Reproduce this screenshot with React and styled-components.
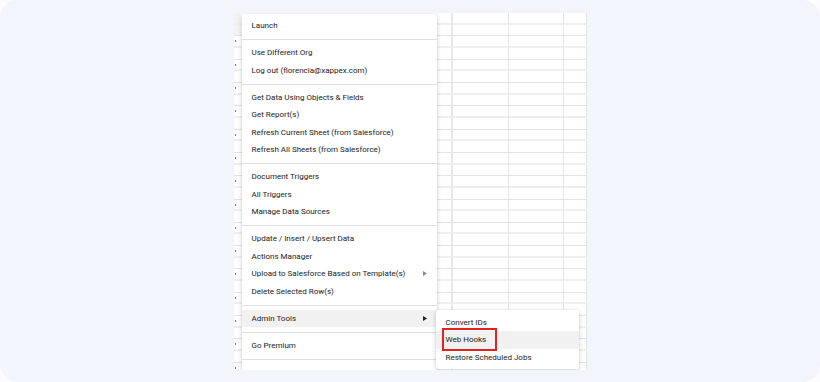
import React from 'react';
import styled, { createGlobalStyle } from 'styled-components';

const GlobalStyle = createGlobalStyle`
  html, body { margin: 0; padding: 0; background: #fcfcff; }
  body { font-family: Roboto, "Liberation Sans", Arial, sans-serif; }
`;

const Frame = styled.div`
  width: 820px;
  height: 382px;
  box-sizing: border-box;
  border-radius: 18px;
  background: #f3f5fd;
  display: flex;
  justify-content: center;
  padding-top: 13px;
  overflow: hidden;
`;

const Sheet = styled.div`
  position: relative;
  width: 353px;
  height: 357px;
  background: #fff;
  overflow: hidden;
  display: grid;
  grid-template-columns: 7px 212px 56px 55px 1fr;
  grid-auto-rows: 11.67px;
  align-content: start;
`;

const Cell = styled.div`
  box-sizing: border-box;
  border-bottom: ${(p) => (p.$even ? '2.5px solid #efefef' : '1px solid #e3e3e3')};
  border-right: ${(p) => (p.$col === 1 ? '2px solid #e8e8e8' : p.$col === 0 ? 'none' : '1px solid #e6e6e6')};
  background: ${(p) => (p.$head ? '#f2f2f2' : '#fff')};
  position: relative;
`;

const Tick = styled.span`
  position: absolute;
  left: 1px;
  top: 4px;
  width: 1px;
  height: 2px;
  background: #7a7a7a;
`;

const Menu = styled.div`
  position: absolute;
  left: 8px;
  top: 1px;
  width: 195px;
  background: #fff;
  border-radius: 4px;
  box-shadow: 0 1px 4px rgba(0, 0, 0, 0.22);
  padding: 3px 0;
  z-index: 2;
`;

const SubMenu = styled.div`
  position: absolute;
  left: 202px;
  top: 297px;
  width: 143px;
  background: #fff;
  border-radius: 3px;
  box-shadow: 0 1px 4px rgba(0, 0, 0, 0.22);
  padding: 3.5px 0 3px;
  z-index: 3;
`;

const Item = styled.div`
  position: relative;
  height: 17.5px;
  box-sizing: border-box;
  padding: 0 10px 0 10px;
  display: flex;
  align-items: center;
  justify-content: space-between;
  font-size: 8px;
  color: #222;
  white-space: nowrap;
  background: ${(p) => (p.$active ? '#f1f1f1' : 'transparent')};
`;

const Separator = styled.div`
  height: 1px;
  background: #e0e0e0;
  margin: 4.5px 0 4px;
`;

const Arrow = styled.svg`
  width: 4px;
  height: 5px;
  flex: none;
  color: ${(p) => (p.$dark ? '#202124' : '#8a8a8a')};
`;

const RedBox = styled.span`
  position: absolute;
  left: 6.5px;
  top: -3px;
  width: 55px;
  height: 22.5px;
  box-sizing: border-box;
  border: 2px solid #e3211e;
  pointer-events: none;
`;

const Caret = ({ dark }) => (
  <Arrow $dark={dark} viewBox="0 0 4 5">
    <polygon points="0,0 4,2.5 0,5" fill="currentColor" />
  </Arrow>
);

const groups = [
  [{ t: 'Launch' }],
  [{ t: 'Use Different Org' }, { t: 'Log out (florencia@xappex.com)' }],
  [
    { t: 'Get Data Using Objects & Fields' },
    { t: 'Get Report(s)' },
    { t: 'Refresh Current Sheet (from Salesforce)' },
    { t: 'Refresh All Sheets (from Salesforce)' },
  ],
  [{ t: 'Document Triggers' }, { t: 'All Triggers' }, { t: 'Manage Data Sources' }],
  [
    { t: 'Update / Insert / Upsert Data' },
    { t: 'Actions Manager' },
    { t: 'Upload to Salesforce Based on Template(s)', sub: 'light' },
    { t: 'Delete Selected Row(s)' },
  ],
  [{ t: 'Admin Tools', sub: 'dark', active: true }],
  [{ t: 'Go Premium' }],
  [{ t: 'Settings' }],
];

const ROWS = 31;
const COLS = 5;

export default function App() {
  const cells = [];
  for (let r = 0; r < ROWS; r++) {
    for (let c = 0; c < COLS; c++) {
      cells.push(
        <Cell key={`${r}-${c}`} $even={r % 2 === 0} $col={c} $head={c === 0 && r < 2}>
          {c === 0 && r >= 2 && r % 2 === 0 ? <Tick /> : null}
        </Cell>
      );
    }
  }
  return (
    <>
      <GlobalStyle />
      <Frame>
        <Sheet>
          {cells}
          <Menu>
            {groups.map((g, gi) => (
              <React.Fragment key={gi}>
                {gi > 0 && <Separator />}
                {g.map((it) => (
                  <Item key={it.t} $active={it.active}>
                    <span>{it.t}</span>
                    {it.sub && <Caret dark={it.sub === 'dark'} />}
                  </Item>
                ))}
              </React.Fragment>
            ))}
          </Menu>
          <SubMenu>
            <Item>Convert IDs</Item>
            <Item $active>
              Web Hooks
              <RedBox />
            </Item>
            <Item>Restore Scheduled Jobs</Item>
          </SubMenu>
        </Sheet>
      </Frame>
    </>
  );
}
